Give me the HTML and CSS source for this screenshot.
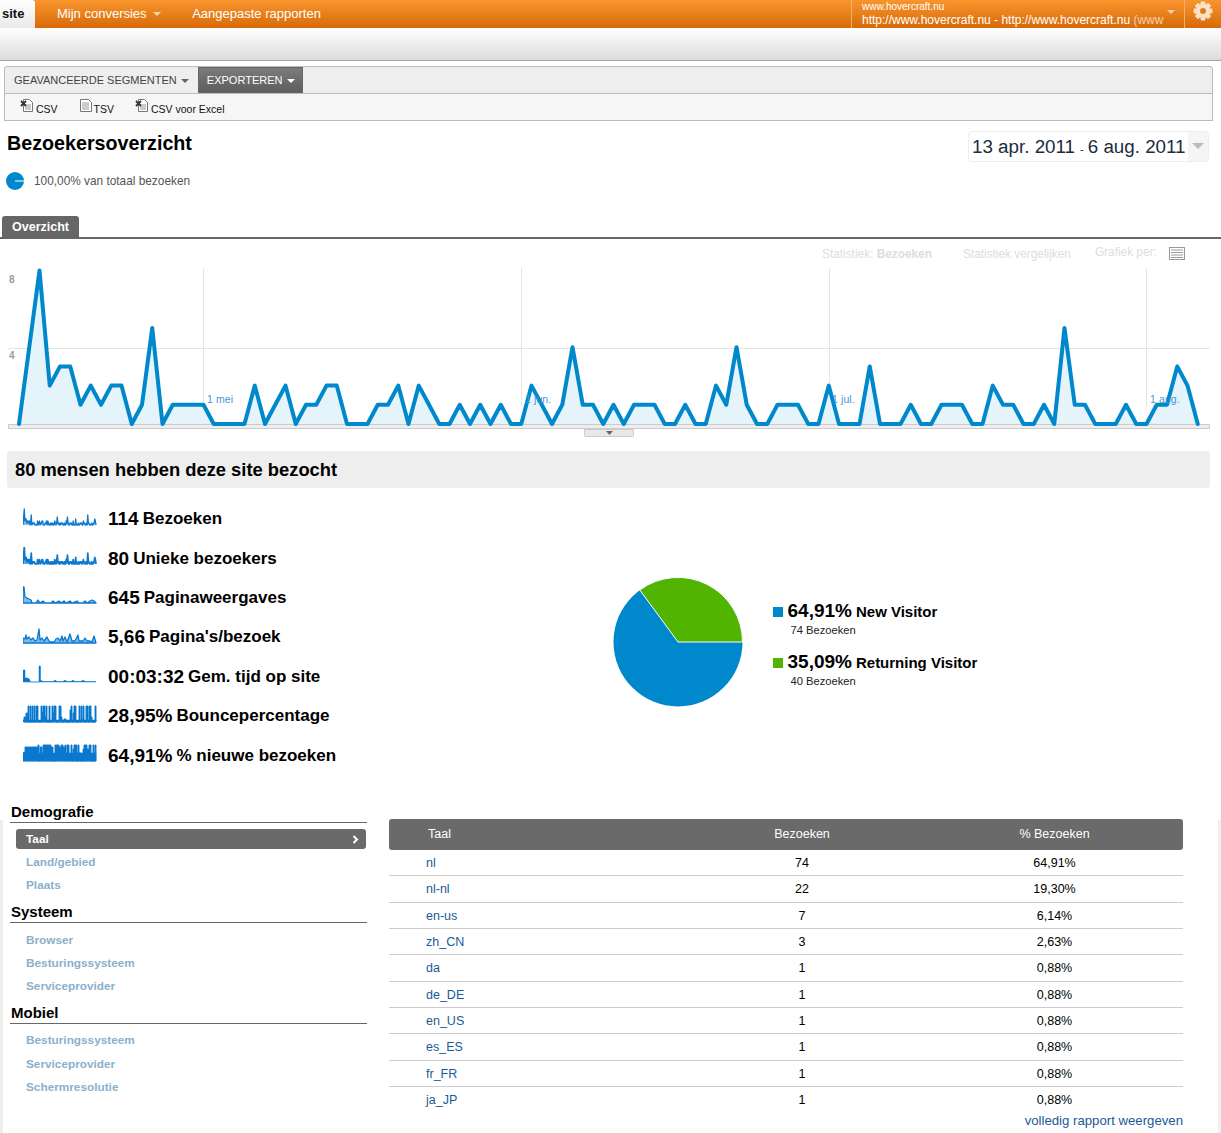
FILE: index.html
```html
<!DOCTYPE html>
<html lang="nl">
<head>
<meta charset="utf-8">
<title>Bezoekersoverzicht</title>
<link rel="stylesheet" href="styles.css">
</head>
<body>
<svg class="defs" width="0" height="0" aria-hidden="true">
  <defs>
    <polyline id="visits" points="0,0 1,4 2,8 3,2 4,3 5,3 6,1 7,2 8,1 9,2 10,2 11,0 12,1 13,5 14,0 15,1 16,1 17,1 18,1 19,0 20,0 21,0 22,0 23,2 24,0 25,1 26,2 27,0 28,1 29,1 30,2 31,2 32,0 33,0 34,0 35,1 36,1 37,2 38,0 39,2 40,1 41,0 42,0 43,1 44,0 45,1 46,0 47,1 48,0 49,0 50,2 51,1 52,0 53,1 54,4 55,1 56,1 57,0 58,1 59,0 60,1 61,1 62,1 63,0 64,0 65,1 66,0 67,0 68,2 69,1 70,4 71,1 72,0 73,0 74,1 75,1 76,1 77,0 78,0 79,2 80,0 81,0 82,0 83,3 84,0 85,0 86,0 87,1 88,0 89,0 90,1 91,1 92,1 93,0 94,0 95,2 96,1 97,1 98,0 99,0 100,1 101,0 102,5 103,1 104,1 105,0 106,0 107,0 108,1 109,0 110,0 111,1 112,1 113,3 114,2 115,0"/>
  </defs>
</svg>

<header class="topbar">
  <div class="tab-site">site</div>
  <nav class="topnav">
    <span class="topnav-item">Mijn conversies <i class="caret caret-pale"></i></span>
    <span class="topnav-item">Aangepaste rapporten</span>
  </nav>
  <div class="profile">
    <div class="profile-text">
      <div class="profile-host">www.hovercraft.nu</div>
      <div class="profile-name">http://www.hovercraft.nu - http://www.hovercraft.nu <span class="profile-fade">(www</span></div>
    </div>
    <i class="caret caret-pale profile-caret"></i>
  </div>
  <div class="settings">
    <svg class="gear" width="20" height="20" viewBox="0 0 20 20">
      <g class="gear-teeth">
        <rect x="7.6" y="0.6" width="4.8" height="18.8" rx="0.8"/>
        <rect x="7.6" y="0.6" width="4.8" height="18.8" rx="0.8" transform="rotate(45 10 10)"/>
        <rect x="7.6" y="0.6" width="4.8" height="18.8" rx="0.8" transform="rotate(90 10 10)"/>
        <rect x="7.6" y="0.6" width="4.8" height="18.8" rx="0.8" transform="rotate(135 10 10)"/>
        <circle cx="10" cy="10" r="7"/>
      </g>
      <circle class="gear-hole" cx="10" cy="10" r="3"/>
    </svg>
  </div>
</header>
<div class="band"></div>

<section class="toolbar">
  <div class="toolbar-tabs">
    <span class="seg-tab">GEAVANCEERDE SEGMENTEN <i class="caret caret-grey"></i></span>
    <span class="seg-tab seg-tab-active">EXPORTEREN <i class="caret caret-white"></i></span>
  </div>
  <div class="toolbar-sub">
    <span class="export">
      <svg class="export-icon" width="15" height="14" viewBox="0 0 15 14"><path class="doc" d="M3.5.5h6l3 3v9h-9z"/><path class="doc-line" d="M5 6h6M5 8h6M5 10h6"/><path class="doc-x" d="M1 2l5 5M6 2l-5 5"/></svg>CSV
    </span>
    <span class="export export-tsv">
      <svg class="export-icon" width="14" height="14" viewBox="0 0 14 14"><path class="doc" d="M1.5.5h8l3 3v9h-11z"/><path class="doc-line" d="M3 4h7M3 6h7M3 8h7M3 10h7"/></svg>TSV
    </span>
    <span class="export export-xls">
      <svg class="export-icon" width="15" height="14" viewBox="0 0 15 14"><path class="doc" d="M3.5.5h6l3 3v9h-9z"/><path class="doc-line" d="M5 6h6M5 8h6M5 10h6"/><path class="doc-x" d="M1 2l5 5M6 2l-5 5"/></svg>CSV voor Excel
    </span>
  </div>
</section>

<section class="heading">
  <h1 class="title">Bezoekersoverzicht</h1>
  <div class="dates">
    <span class="dates-text">13 apr. 2011<span class="dates-sep">-</span>6 aug. 2011</span>
    <span class="dates-btn"><i class="caret caret-date"></i></span>
  </div>
</section>

<div class="coverage">
  <svg class="coverage-pie" width="18" height="18" viewBox="0 0 18 18"><circle class="fill-blue" cx="9" cy="9" r="9"/><path class="coverage-line" d="M9 9h9"/></svg>
  <span>100,00% van totaal bezoeken</span>
</div>

<div class="tabs"><span class="tab">Overzicht</span></div>

<div class="chart-controls">
  <span class="ctl-metric">Statistiek: <b>Bezoeken</b></span>
  <span class="ctl-compare">Statistiek vergelijken</span>
  <span class="ctl-per">Grafiek per:</span>
  <svg class="ctl-icon" width="16" height="13" viewBox="0 0 16 13"><rect class="ctl-box" x=".5" y=".5" width="15" height="12"/><path class="ctl-lines" d="M2 3h12M2 5.500h12M2 8h12M2 10.500h12"/></svg>
</div>

<div class="chart-wrap">
  <svg class="chart" width="1221" height="170" viewBox="0 268 1221 170">
    <path class="grid" d="M8 348.500H1210M203.500 268V407M521.500 268V407M829.500 268V407M1146.500 268V407"/>
    <text class="axis" x="9" y="283">8</text>
    <text class="axis" x="9" y="359">4</text>
    <rect class="chart-floor" x="8.500" y="424.500" width="1201" height="4"/>
    <g transform="translate(19 424) scale(10.25 -19.2)">
      <use href="#visits" class="chart-line"/>
    </g>
    <text class="date-label" x="207" y="403">1 mei</text>
    <text class="date-label" x="525" y="403">1 jun.</text>
    <text class="date-label" x="832" y="403">1 jul.</text>
    <text class="date-label" x="1150" y="403">1 aug.</text>
    <path class="handle" d="M584.500 429.500h49v6a1 1 0 0 1-1 1h-47a1 1 0 0 1-1-1z"/>
    <path class="handle-arrow" d="M606 431h7l-3.500 4z"/>
  </svg>
</div>

<h2 class="summary">80 mensen hebben deze site bezocht</h2>

<section class="overview">
  <ul class="metrics">
    <li class="metric">
      <svg class="spark" width="74" height="18" viewBox="0 0 74 18"><g transform="translate(0 17) scale(.635 -2)"><use href="#visits" class="spark-line"/></g></svg>
      <b class="metric-num">114</b><span class="metric-label">Bezoeken</span>
    </li>
    <li class="metric">
      <svg class="spark" width="74" height="18" viewBox="0 0 74 18"><g transform="translate(0 17) scale(.635 -2.2)"><use href="#visits" class="spark-line spark-thick"/></g></svg>
      <b class="metric-num">80</b><span class="metric-label">Unieke bezoekers</span>
    </li>
    <li class="metric">
      <svg class="spark" width="74" height="18" viewBox="0 0 74 18"><path class="spark-line" d="M0 17V1H1L2 11 4 12 6 13 8 14 9 17 13 17 15 14 17 17 20 15 22 17 28 17 30 15 32 17 36 15 38 17 41 15 43 17 47 15 49 17 54 15 56 17 60 17 62 15 64 17 67 15 69 14 71 15 73 17z"/></svg>
      <b class="metric-num">645</b><span class="metric-label">Paginaweergaves</span>
    </li>
    <li class="metric">
      <svg class="spark" width="74" height="18" viewBox="0 0 74 18"><path class="spark-line" d="M0 17V12L2 13 3 9 4 13 6 11 8 14 10 12 12 15 14 14 16 3 17 14 19 12 21 15 24 11 26 15 28 16 31 16 33 13 35 12 37 15 39 10 40 15 42 11 44 16 47 8 49 15 52 15 55 9 56 15 60 15 62 12 64 15 67 15 69 16 71 10 73 17z"/></svg>
      <b class="metric-num">5,66</b><span class="metric-label">Pagina's/bezoek</span>
    </li>
    <li class="metric">
      <svg class="spark" width="74" height="18" viewBox="0 0 74 18"><path class="spark-fill" d="M0 17V5H2V13H5L7 15V17H16V1H17.500V15L20 16.500H30L32 15 34 16.500H40L42 15 44 16.500H48L50 15 52 16.500 58 16.500 60 15 62 16.500H73V17z"/></svg>
      <b class="metric-num">00:03:32</b><span class="metric-label">Gem. tijd op site</span>
    </li>
    <li class="metric">
      <svg class="spark" width="74" height="18" viewBox="0 0 74 18"><path class="spark-fill" d="M0 17V15H73V17z"/><path class="spark-fill spark-bars" d="M1 17V12H3V8H5V1H6V17H7V1H8V17H9V1H10V17H11V1H12V17H13V1H15V17H18V1H19V7H20V1H22V12H23V1H24V17H26V1H27V17H29V1H30V8H31V1H33V17H36V1H38V12H39V17H41V14H43V17H47V5H48V1H49V17H50V8H51V1H53V17H56V1H57V17H58V1H59V14H60V1H61V17H63V1H65V17H66V1H68V12H69V17H72V1H73V17z"/></svg>
      <b class="metric-num">28,95%</b><span class="metric-label">Bouncepercentage</span>
    </li>
    <li class="metric">
      <svg class="spark" width="74" height="18" viewBox="0 0 74 18"><path class="spark-fill" d="M0 17V9H73V17z"/><path class="spark-fill spark-bars" d="M0 17V9L2 8V3H15V1H16V17H17V3H19V17H20V1H28V3H30V17H32V1H36V3H38V1H40V3H42V1H43V17H44V1H46V12H48V1H49V17H50V5H51V1H54V17H55V1H56V9H58V17H60V5H61V1H64V5H66V1H68V17H70V1H71V17H72V1H73V17z"/></svg>
      <b class="metric-num">64,91%</b><span class="metric-label">% nieuwe bezoeken</span>
    </li>
  </ul>
  <svg class="pie" width="130" height="130" viewBox="0 0 130 130">
    <circle class="fill-blue" cx="65" cy="65" r="64.500"/>
    <path class="fill-green pie-slice" d="M65 65H129.500A64.500 64.500 0 0 0 26.800 13z"/>
  </svg>
  <div class="legend">
    <div class="legend-item">
      <div class="legend-main"><i class="swatch fill-bg-blue"></i><b class="legend-num">64,91%</b><b class="legend-label">New Visitor</b></div>
      <div class="legend-sub">74 Bezoeken</div>
    </div>
    <div class="legend-item">
      <div class="legend-main"><i class="swatch fill-bg-green"></i><b class="legend-num">35,09%</b><b class="legend-label">Returning Visitor</b></div>
      <div class="legend-sub">40 Bezoeken</div>
    </div>
  </div>
</section>

<section class="lower">
  <aside class="side">
    <h3 class="side-title">Demografie</h3>
    <ul class="side-list side-list-first">
      <li class="side-current">Taal<svg class="chev" width="7" height="9" viewBox="0 0 7 9"><path d="M1.500 1l3.500 3.500-3.500 3.500"/></svg></li>
      <li class="side-item">Land/gebied</li>
      <li class="side-item">Plaats</li>
    </ul>
    <h3 class="side-title">Systeem</h3>
    <ul class="side-list side-list-mid">
      <li class="side-item">Browser</li>
      <li class="side-item">Besturingssysteem</li>
      <li class="side-item">Serviceprovider</li>
    </ul>
    <h3 class="side-title">Mobiel</h3>
    <ul class="side-list">
      <li class="side-item">Besturingssysteem</li>
      <li class="side-item">Serviceprovider</li>
      <li class="side-item">Schermresolutie</li>
    </ul>
  </aside>
  <div class="report">
    <div class="report-head">
      <span class="cell-head">Taal</span><span class="cell-num">Bezoeken</span><span class="cell-pct">% Bezoeken</span>
    </div>
    <div class="report-row"><a class="cell-key">nl</a><span class="cell-num">74</span><span class="cell-pct">64,91%</span></div>
    <div class="report-row"><a class="cell-key">nl-nl</a><span class="cell-num">22</span><span class="cell-pct">19,30%</span></div>
    <div class="report-row"><a class="cell-key">en-us</a><span class="cell-num">7</span><span class="cell-pct">6,14%</span></div>
    <div class="report-row"><a class="cell-key">zh_CN</a><span class="cell-num">3</span><span class="cell-pct">2,63%</span></div>
    <div class="report-row"><a class="cell-key">da</a><span class="cell-num">1</span><span class="cell-pct">0,88%</span></div>
    <div class="report-row"><a class="cell-key">de_DE</a><span class="cell-num">1</span><span class="cell-pct">0,88%</span></div>
    <div class="report-row"><a class="cell-key">en_US</a><span class="cell-num">1</span><span class="cell-pct">0,88%</span></div>
    <div class="report-row"><a class="cell-key">es_ES</a><span class="cell-num">1</span><span class="cell-pct">0,88%</span></div>
    <div class="report-row"><a class="cell-key">fr_FR</a><span class="cell-num">1</span><span class="cell-pct">0,88%</span></div>
    <div class="report-row report-row-last"><a class="cell-key">ja_JP</a><span class="cell-num">1</span><span class="cell-pct">0,88%</span></div>
    <a class="report-more">volledig rapport weergeven</a>
  </div>
</section>
</body>
</html>
```

FILE: styles.css
```css
* { box-sizing: border-box; }
html, body { margin: 0; padding: 0; }
body {
  position: relative;
  width: 1221px;
  height: 1133px;
  overflow: hidden;
  background: #fff;
  color: #000;
  font-family: "Liberation Sans", Arial, sans-serif;
  font-size: 12px;
}
body::before, body::after {
  content: "";
  position: absolute;
  top: 820px;
  bottom: 0;
  background: #eee;
}
body::before { left: 0; width: 3px; }
body::after { right: 0; width: 3px; background: #f0f0f0; }
ul { list-style: none; margin: 0; padding: 0; }
h1, h2, h3 { margin: 0; }
.defs { display: block; height: 0; }
i { display: inline-block; }

.caret { width: 0; height: 0; border-style: solid; border-color: transparent; border-width: 4px 4px 0; vertical-align: middle; }
.caret-pale { border-top-color: #f6d3ac; }
.caret-grey { border-top-color: #666; }
.caret-white { border-top-color: #fff; }
.caret-date { border-width: 6px 6px 0; border-top-color: #bbb; }

/* top bar */
.topbar {
  display: flex;
  height: 28px;
  background: linear-gradient(#f9952e, #d76a08);
  color: #fff;
}
.tab-site {
  flex: none;
  width: 35px;
  padding-left: 2px;
  line-height: 27px;
  font-size: 13px;
  font-weight: bold;
  color: #111;
  background: linear-gradient(#fff, #e9e9e9);
  border-top-right-radius: 3px;
}
.topnav { display: flex; flex: 1; padding-left: 22px; gap: 31px; font-size: 13px; line-height: 27px; }
.topnav .caret { margin: -2px 0 0 3px; }
.profile {
  display: flex;
  flex: none;
  width: 334px;
  padding-left: 10px;
  border-left: 1px solid #f2b26d;
  border-right: 1px solid #f2b26d;
}
.profile-text { width: 301px; white-space: nowrap; }
.profile-host { font-size: 10px; line-height: 13px; }
.profile-name { font-size: 12px; line-height: 15px; color: #fff; }
.profile-fade { opacity: .65; }
.profile-caret { margin: 10px 0 0 4px; }
.settings { flex: none; width: 36px; display: flex; justify-content: center; padding-top: 1px; }
.gear-teeth { fill: #fbe3c8; }
.gear-hole { fill: #e07c15; }

.band {
  height: 33px;
  background: linear-gradient(#fff, #dcdcdc);
  border-bottom: 1px solid #a3a3a3;
}

/* export toolbar */
.toolbar { margin: 5px 8px 0 4px; color: #333; }
.toolbar-tabs {
  display: flex;
  height: 28px;
  background: #eee;
  border: 1px solid #bbb;
  border-radius: 3px 3px 0 0;
  font-size: 11px;
}
.seg-tab { padding: 0 9px; line-height: 26px; color: #444; white-space: nowrap; }
.seg-tab .caret { margin-left: 1px; }
.seg-tab-active {
  flex: none;
  width: 105px;
  height: 26px;
  color: #fff;
  background: linear-gradient(#7b7b7b, #5e5e5e);
  border: 1px solid #666;
  line-height: 24px;
  padding: 0 0 0 8px;
}
.toolbar-sub {
  display: flex;
  height: 28px;
  margin-top: -1px;
  padding: 5px 0 0 15px;
  background: #f6f6f6;
  border: 1px solid #bbb;
  font-size: 10.500px;
  line-height: 20px;
  color: #111;
}
.export { display: inline-flex; align-items: flex-start; }
.export-tsv { margin-left: 21px; }
.export-xls { margin-left: 21px; }
.export-icon { margin-right: 1px; }
.doc { fill: #fff; stroke: #777; }
.doc-line { stroke: #999; fill: none; }
.doc-x { stroke: #333; stroke-width: 1.800; fill: none; }

/* heading */
.heading { display: flex; justify-content: space-between; padding: 10px 12px 0 7px; }
.title { font-size: 19.700px; line-height: 24px; font-weight: bold; }
.dates {
  display: flex;
  width: 241px;
  height: 31px;
  padding-left: 3px;
  border: 1px solid #eee;
  border-radius: 4px;
  font-size: 18.800px;
  line-height: 29px;
  color: #1c2b3d;
  white-space: nowrap;
  overflow: hidden;
}
.dates-text { flex: 1; }
.dates-sep { font-size: 11px; margin: 0 4px 0 5px; }
.dates-btn { flex: none; width: 20px; background: #f5f5f5; text-align: center; line-height: 26px; }

.coverage { display: flex; align-items: center; gap: 10px; height: 18px; margin: 10px 0 0 6px; font-size: 11.850px; color: #555; }
.fill-blue { fill: #0088cc; }
.fill-green { fill: #50b400; }
.fill-bg-blue { background: #0088cc; }
.fill-bg-green { background: #50b400; }
.coverage-line { stroke: #fff; stroke-width: 1; }

.tabs { height: 23px; margin-top: 26px; padding-left: 2px; border-bottom: 2px solid #666; }
.tab {
  display: block;
  width: 77px;
  height: 21px;
  background: #666;
  color: #fff;
  font-weight: bold;
  font-size: 12.500px;
  line-height: 22px;
  text-align: center;
  border-radius: 3px 3px 0 0;
}

.chart-controls {
  display: flex;
  align-items: flex-start;
  height: 29px;
  padding: 8px 0 0 822px;
  color: #ddd;
  font-size: 11.850px;
  line-height: 14px;
}
.ctl-compare { margin-left: 31px; }
.ctl-per { margin: -2px 0 0 24px; }
.ctl-icon { margin: 0 0 0 12px; }
.ctl-box { fill: #fff; stroke: #999; }
.ctl-lines { stroke: #999; fill: none; }

.chart-wrap { height: 170px; }
.chart { display: block; }
.grid { stroke: #e5e5e5; fill: none; shape-rendering: crispEdges; }
.axis { font: bold 10px "Liberation Sans", Arial, sans-serif; fill: #a09a96; }
.chart-floor { fill: #eee; stroke: #ccc; }
.chart-line { fill: #e5f3fb; stroke: #0088cc; stroke-width: 4; stroke-linejoin: round; stroke-linecap: round; }
.chart-line, .spark-line { vector-effect: non-scaling-stroke; }
.date-label { font: 10.500px "Liberation Sans", Arial, sans-serif; letter-spacing: .1px; fill: #4b94d6; }
.handle { fill: #e8e8e8; stroke: #ccc; }
.handle-arrow { fill: #666; }

#visits { vector-effect: non-scaling-stroke; }

.summary {
  height: 37px;
  margin: 13px 11px 0 7px;
  padding-left: 8px;
  background: #eee;
  border-radius: 3px;
  font-size: 18.350px;
  line-height: 37px;
}

/* metrics + pie */
.overview { display: flex; height: 314px; padding: 11.500px 0 0 23px; }
.metrics { width: 589.500px; }
.metric { display: flex; align-items: center; height: 39.400px; white-space: nowrap; }
.spark { flex: none; margin-right: 11px; margin-top: -5px; }
.spark-line { fill: #7dbbe8; stroke: #0a78cf; stroke-width: 1.300; stroke-linejoin: round; }
.spark-thick { stroke-width: 1.700; fill: #5aa8e4; }
.spark-fill { fill: #0a78cf; stroke: #0a78cf; stroke-width: .5; }
.spark-bars { stroke-width: .9; }
.metric-num { font-size: 19px; margin-right: 4px; }
.metric-label { font-size: 17px; font-weight: bold; }

.pie { flex: none; margin-top: 77.500px; }
.pie-slice { stroke: #fff; stroke-width: 1; }
.legend { margin: 100.500px 0 0 30px; }
.legend-item + .legend-item { margin-top: 13px; }
.legend-main { display: flex; align-items: center; height: 22px; white-space: nowrap; }
.swatch { width: 10px; height: 10px; margin: 1px 5px 0 0; }
.legend-num { font-size: 19px; margin-right: 4px; }
.legend-label { font-size: 15px; }
.legend-sub { padding-left: 18px; font-size: 11.200px; line-height: 16px; color: #222; }

/* lower part */
.lower { display: flex; padding-left: 10px; }
.side { width: 357px; }
.side-title {
  height: 21px;
  margin-top: 4px;
  padding-left: 1px;
  border-bottom: 1px solid #666;
  font-size: 15px;
  line-height: 20px;
}
.side-title:first-child { margin-top: 0; }
.side-list { padding-top: 5px; font-size: 11.800px; font-weight: bold; color: #8ab0cc; }
.side-list-first { padding-top: 6px; }
.side-list-first .side-item { height: 23.400px; }
.side-list-mid { padding-top: 6px; }
.side-list-mid .side-item { height: 23.300px; }
.side-list-mid { padding-bottom: .6px; }
.side-current {
  display: flex;
  align-items: center;
  justify-content: space-between;
  width: 350px;
  height: 20px;
  margin: 0 0 2px 6px;
  padding: 0 7px 0 10px;
  background: #6a6a6a;
  color: #fff;
  border-radius: 3px;
}
.chev { fill: none; stroke: #fff; stroke-width: 2; }
.side-item { height: 23.300px; padding-left: 16px; line-height: 23px; }

.report { width: 794px; margin: 17px 0 0 22px; font-size: 12.500px; }
.report-head, .report-row { display: grid; grid-template-columns: 289px 248px 1fr; }
.report-head {
  height: 31px;
  background: #6a6a6a;
  color: #fff;
  line-height: 31px;
  border-radius: 3px;
}
.cell-head { padding-left: 39px; }
.report-row { height: 26.330px; line-height: 26px; border-bottom: 1px solid #ccc; }
.report-row-last { border-bottom: 0; }
.cell-key { padding-left: 37px; color: #1a5a96; }
.cell-num { text-align: center; }
.cell-pct { text-align: center; }
.report-more { display: block; text-align: right; line-height: 16px; color: #1a5a96; font-size: 13.200px; }
```
